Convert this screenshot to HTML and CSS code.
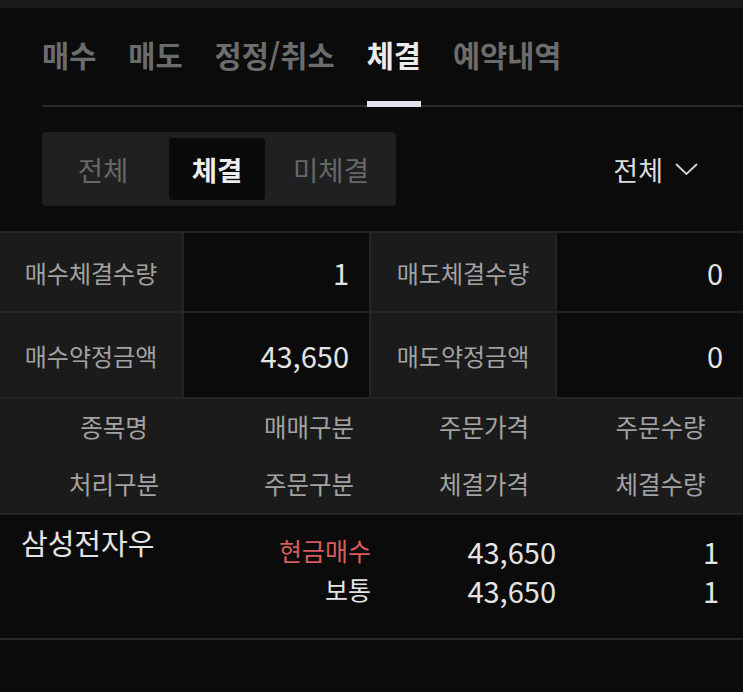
FILE: index.html
```html
<!DOCTYPE html>
<html lang="ko">
<head>
<meta charset="utf-8">
<link rel="stylesheet" href="styles.css">
</head>
<body>
<div class="topbar"></div>
<nav class="tabs">
  <span class="tab">매수</span>
  <span class="tab">매도</span>
  <span class="tab">정정/취소</span>
  <span class="tab active">체결</span>
  <span class="tab">예약내역</span>
</nav>
<div class="filters">
  <div class="segment">
    <span class="seg">전체</span>
    <span class="seg on">체결</span>
    <span class="seg">미체결</span>
  </div>
  <div class="dropdown">
    <span>전체</span>
    <svg class="chev" width="23" height="12" viewBox="0 0 23 12"><path d="M1 1 L11.5 11 L22 1" fill="none" stroke="#d6d6d6" stroke-width="1.8"/></svg>
  </div>
</div>
<div class="summary">
  <div class="lab">매수체결수량</div>
  <div class="val">1</div>
  <div class="lab">매도체결수량</div>
  <div class="val">0</div>
  <div class="lab">매수약정금액</div>
  <div class="val">43,650</div>
  <div class="lab">매도약정금액</div>
  <div class="val">0</div>
</div>
<div class="head">
  <span>종목명</span><span>매매구분</span><span>주문가격</span><span>주문수량</span>
  <span>처리구분</span><span>주문구분</span><span>체결가격</span><span>체결수량</span>
</div>
<div class="row">
  <div class="name">삼성전자우</div>
  <div class="c2"><span class="red">현금매수</span><span>보통</span></div>
  <div class="c3"><span>43,650</span><span>43,650</span></div>
  <div class="c4"><span>1</span><span>1</span></div>
</div>
</body>
</html>
```
FILE: styles.css
```css
html, body {
  margin: 0;
  padding: 0;
  background: #0b0b0b;
}
body {
  width: 743px;
  height: 692px;
  overflow: hidden;
  font-family: "Noto Sans CJK KR", "Noto Sans", sans-serif;
  color: #e2e2e2;
}
.topbar {
  height: 8px;
  background: #1a1a1a;
}
.tabs {
  display: flex;
  gap: 32px;
  margin-left: 42px;
  padding-top: 26px;
  border-bottom: 2px solid #2a2a2a;
  height: 99px;
  box-sizing: border-box;
}
.tab {
  font-size: 29.5px;
  font-weight: 700;
  line-height: 40px;
  color: #6c6c6c;
  position: relative;
}
.tab.active {
  color: #ececec;
}
.tab.active::after {
  content: "";
  position: absolute;
  left: 0;
  right: 0;
  bottom: -2px;
  height: 6px;
  background: #e0e4e8;
}
.filters {
  display: flex;
  justify-content: space-between;
  align-items: flex-start;
  padding: 25px 45px 0 42px;
  height: 124px;
  box-sizing: border-box;
}
.segment {
  display: grid;
  grid-template-columns: 96px 96px 96px;
  gap: 18px;
  padding: 6px 17px 6px 13px;
  background: #1f2021;
  border-radius: 4px;
}
.seg {
  height: 62px;
  display: flex;
  align-items: center;
  justify-content: center;
  font-size: 27.5px;
  color: #676767;
  border-radius: 3px;
}
.seg.on {
  background: #0a0a0a;
  color: #ededed;
  font-weight: 700;
}
.dropdown {
  display: flex;
  align-items: center;
  gap: 12px;
  height: 74px;
  font-size: 27px;
  color: #dcdcdc;
}
.summary {
  display: grid;
  grid-template-columns: 182px 185px 184px 186px;
  grid-template-rows: 78px 84px;
  gap: 2px;
  background: #242424;
  border-top: 2px solid #242424;
  border-bottom: 2px solid #242424;
}
.lab {
  background: #1b1b1b;
  display: flex;
  align-items: center;
  justify-content: center;
  font-size: 24px;
  color: #a2a2a2;
}
.val {
  background: #0b0b0b;
  display: flex;
  align-items: center;
  justify-content: flex-end;
  padding-right: 20px;
  font-size: 29px;
  color: #e4e4e4;
}
.head {
  display: grid;
  grid-template-columns: 228px 162px 188px 165px;
  grid-template-rows: 54px 60px;
  background: #1b1b1b;
  border-bottom: 2px solid #262626;
  font-size: 24.5px;
  color: #a2a2a2;
}
.head span {
  display: flex;
  align-items: center;
  justify-content: center;
}
.row {
  display: grid;
  grid-template-columns: 228px 162px 188px 165px;
  height: 123px;
  border-bottom: 2px solid #262626;
}
.name {
  padding: 7px 0 0 21px;
  font-size: 29px;
  line-height: 40px;
  color: #e4e4e4;
}
.c2, .c3, .c4 {
  display: flex;
  flex-direction: column;
  align-items: flex-end;
  padding-top: 17px;
  font-size: 29px;
  line-height: 39px;
  color: #e4e4e4;
}
.c2 {
  padding-top: 16px;
  padding-right: 19px;
  font-size: 25px;
}
.c3 { padding-right: 22px; }
.c4 { padding-right: 24px; }
.red {
  color: #d95c5c;
}
```
